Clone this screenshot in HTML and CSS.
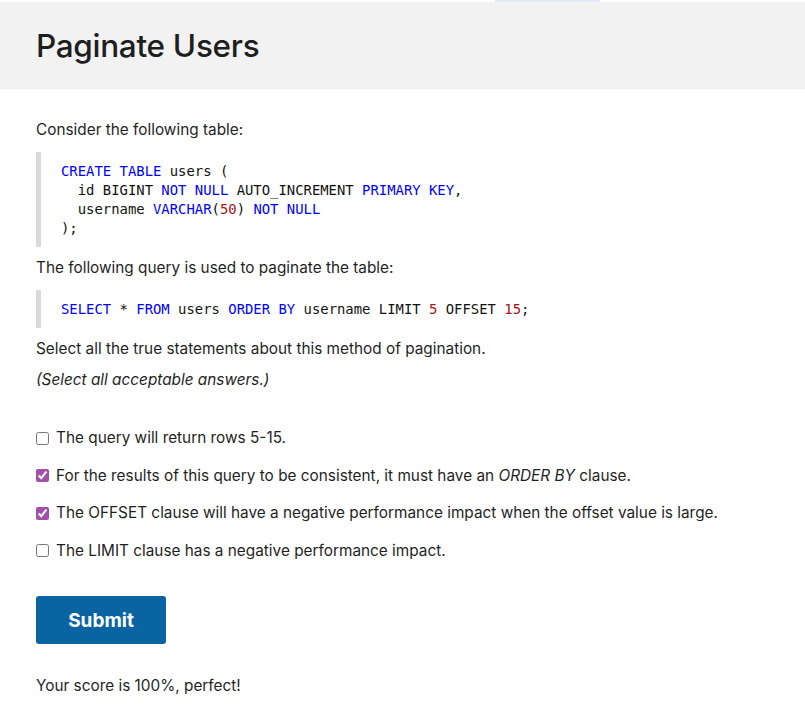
FILE: index.html
```html
<!DOCTYPE html>
<html>
<head>
<meta charset="utf-8">
<link rel="stylesheet" href="styles.css">
</head>
<body>
<div class="topstrip"><span class="tab-mark"></span></div>
<header class="header">
  <h1 class="title">Paginate Users</h1>
</header>
<main class="content">
  <p class="para">Consider the following table:</p>
  <div class="code">
    <div class="line"><span class="kw">CREATE TABLE</span> users (</div>
    <div class="line">  id BIGINT <span class="kw">NOT NULL</span> AUTO_INCREMENT <span class="kw">PRIMARY KEY</span>,</div>
    <div class="line">  username <span class="kw">VARCHAR</span>(<span class="num">50</span>) <span class="kw">NOT NULL</span></div>
    <div class="line">);</div>
  </div>
  <p class="para">The following query is used to paginate the table:</p>
  <div class="code">
    <div class="line"><span class="kw">SELECT</span> * <span class="kw">FROM</span> users <span class="kw">ORDER BY</span> username LIMIT <span class="num">5</span> OFFSET <span class="num">15</span>;</div>
  </div>
  <p class="para">Select all the true statements about this method of pagination.</p>
  <p class="para hint"><em>(Select all acceptable answers.)</em></p>
  <ul class="options">
    <li class="option"><label><input type="checkbox"><span>The query will return rows 5-15.</span></label></li>
    <li class="option"><label><input type="checkbox" checked><span>For the results of this query to be consistent, it must have an <em>ORDER BY</em> clause.</span></label></li>
    <li class="option"><label><input type="checkbox" checked><span>The OFFSET clause will have a negative performance impact when the offset value is large.</span></label></li>
    <li class="option"><label><input type="checkbox"><span>The LIMIT clause has a negative performance impact.</span></label></li>
  </ul>
  <button class="submit">Submit</button>
  <p class="score">Your score is 100%, perfect!</p>
</main>
</body>
</html>
```
FILE: styles.css
```css
html, body {
  margin: 0;
  padding: 0;
  background: #ffffff;
}
body {
  font-family: "Inter", "Lato", sans-serif;
  color: #1f1f1f;
  font-size: 15.35px;
}
.topstrip {
  height: 2px;
  background: #ffffff;
  position: relative;
}
.tab-mark {
  position: absolute;
  left: 495px;
  top: 0;
  width: 105px;
  height: 2px;
  background: #e1ecf8;
}
.header {
  background: #f2f2f2;
  height: 87px;
  display: flex;
  align-items: center;
  padding: 0 36px;
}
.title {
  margin: 0;
  font-size: 31.5px;
  font-weight: 500;
  color: #1e1e1e;
  letter-spacing: -0.3px;
}
.content {
  padding: 30px 36px 0;
}
.para {
  margin: 0;
  line-height: 20px;
  padding: 0;
}
.content > .para:first-child {
  margin-top: 1px;
}
.code {
  margin: 12px 0 11px;
  border-left: 5px solid #d9d9d9;
  padding: 10px 20px 9px;
  font-family: "DejaVu Sans Mono", monospace;
  font-size: 13.9px;
  line-height: 19px;
  color: #111;
}
.line {
  white-space: pre;
}
.kw { color: #0000ff; }
.num { color: #a31515; }
.hint {
  margin-top: 11px;
}
.options {
  list-style: none;
  margin: 38px 0 0;
  padding: 0;
}
.option {
  height: 37.5px;
  line-height: 20px;
}
.option label {
  display: flex;
  align-items: center;
  gap: 7px;
}
.option input {
  margin: 0;
  width: 13px;
  height: 13px;
  accent-color: #a24fa8;
}
.submit {
  margin-top: 18px;
  width: 130px;
  height: 48px;
  background: #0a64a1;
  color: #ffffff;
  border: none;
  border-radius: 3px;
  font-family: "Inter", sans-serif;
  font-weight: 700;
  font-size: 19px;
}
.score {
  margin: 32px 0 0;
  line-height: 20px;
}
```
